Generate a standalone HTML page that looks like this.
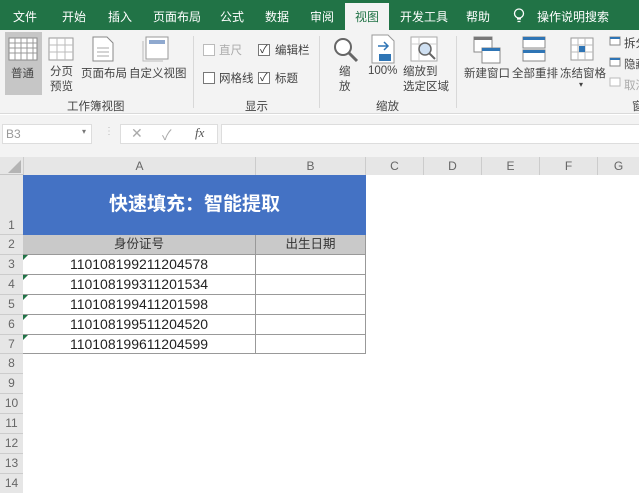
<!DOCTYPE html>
<html><head><meta charset="utf-8">
<style>
*{margin:0;padding:0;box-sizing:border-box}
body{width:639px;height:493px;overflow:hidden;background:#fff;font-family:"Liberation Sans","Noto Sans CJK SC",sans-serif;position:relative;font-size:12px;color:#333}
.abs{position:absolute}
.tabs{left:0;top:0;width:639px;height:30px;background:#217346}
.tab{position:absolute;top:8px;color:#fff;font-size:12px}
.ribbon{left:0;top:30px;width:639px;height:84px;background:#f3f3f3;border-bottom:1px solid #dadada}
.rl{position:absolute;font-size:11.5px;color:#444;white-space:nowrap}
.sep{position:absolute;top:36px;width:1px;height:72px;background:#d8d8d8}
.cb{position:absolute;width:12px;height:12px;border:1px solid #777;background:#fff}
.hdr{background:#e6e6e6;color:#666;font-size:12px;text-align:center;position:absolute}
.id{width:233px;border-right:1px solid #999;text-align:center;line-height:19px;font-size:14px;color:#222}
</style></head><body>
<div class="abs tabs">
<span class="tab" style="left:13px">文件</span>
<span class="tab" style="left:62px">开始</span>
<span class="tab" style="left:108px">插入</span>
<span class="tab" style="left:153px">页面布局</span>
<span class="tab" style="left:220px">公式</span>
<span class="tab" style="left:265px">数据</span>
<span class="tab" style="left:310px">审阅</span>
<div class="abs" style="left:345px;top:3px;width:44px;height:27px;background:#f3f3f3"></div>
<span class="tab" style="left:355px;color:#217346">视图</span>
<span class="tab" style="left:400px">开发工具</span>
<span class="tab" style="left:466px">帮助</span>
<svg class="abs" style="left:513px;top:8px" width="12" height="15"><circle cx="6" cy="5.5" r="4.5" fill="none" stroke="#fff" stroke-width="1.3"/><path d="M4 11h4M4.5 13.5h3" stroke="#fff" stroke-width="1.3"/></svg>
<span class="tab" style="left:537px">操作说明搜索</span>
</div>
<div class="abs ribbon"></div>
<div class="abs" style="left:5px;top:32px;width:37px;height:63px;background:#c6c6c6"></div>
<svg class="abs" style="left:8px;top:37px" width="30" height="24"><rect x="1" y="1" width="28" height="22" fill="#fff" stroke="#888"/><path d="M1 6h28M1 11h28M1 16h28M7 1v22M13 1v22M19 1v22M25 1v22" stroke="#999"/></svg>
<span class="rl" style="left:11px;top:65px">普通</span>
<svg class="abs" style="left:48px;top:37px" width="26" height="24"><rect x="1" y="1" width="24" height="22" fill="#fff" stroke="#999"/><path d="M1 8h24M1 15h24M9 1v22M17 1v22" stroke="#bbb"/></svg>
<span class="rl" style="left:50px;top:65px;line-height:15px">分页<br>预览</span>
<svg class="abs" style="left:92px;top:36px" width="22" height="26"><path d="M1 1h14l6 6v18H1z" fill="#fff" stroke="#888"/><path d="M5 12h12M5 16h12M5 20h12" stroke="#aaa"/></svg>
<span class="rl" style="left:81px;top:65px">页面布局</span>
<svg class="abs" style="left:142px;top:36px" width="28" height="26"><rect x="4" y="1" width="22" height="22" fill="#fff" stroke="#999"/><rect x="7" y="4" width="16" height="4" fill="#8fa9cf"/><path d="M1 5v20h20" fill="none" stroke="#bbb"/></svg>
<span class="rl" style="left:129px;top:65px">自定义视图</span>
<span class="rl" style="left:67px;top:98px">工作簿视图</span>
<div class="sep" style="left:193px"></div>
<div class="cb" style="left:203px;top:44px;border-color:#bbb"></div><span class="rl" style="left:219px;top:42px;color:#aaa">直尺</span>
<div class="cb" style="left:258px;top:44px"></div><span class="abs" style="left:260px;top:41px;font-size:11px">✓</span><span class="rl" style="left:275px;top:42px">编辑栏</span>
<div class="cb" style="left:203px;top:72px"></div><span class="rl" style="left:219px;top:70px">网格线</span>
<div class="cb" style="left:258px;top:72px"></div><span class="abs" style="left:260px;top:69px;font-size:11px">✓</span><span class="rl" style="left:275px;top:70px">标题</span>
<span class="rl" style="left:245px;top:98px">显示</span>
<div class="sep" style="left:319px"></div>
<svg class="abs" style="left:332px;top:36px" width="28" height="28"><circle cx="11" cy="11" r="8" fill="#fff" stroke="#666" stroke-width="2"/><path d="M17 17l8 8" stroke="#666" stroke-width="3"/></svg>
<span class="rl" style="left:339px;top:65px;line-height:15px">缩<br>放</span>
<svg class="abs" style="left:370px;top:34px" width="26" height="30"><path d="M2 1h16l6 6v22H2z" fill="#fff" stroke="#999"/><path d="M8 12h10M14 8l4 4-4 4" fill="none" stroke="#2f75b5" stroke-width="1.5"/><rect x="9" y="20" width="12" height="7" fill="#2f75b5"/></svg>
<span class="rl" style="left:368px;top:65px">100%</span>
<svg class="abs" style="left:410px;top:36px" width="30" height="28"><rect x="1" y="1" width="26" height="24" fill="#fff" stroke="#aaa"/><path d="M1 8h26M9 1v24" stroke="#ccc"/><circle cx="15" cy="13" r="6" fill="#cfe0f2" stroke="#666" stroke-width="1.5"/><path d="M19 17l6 6" stroke="#666" stroke-width="2"/></svg>
<span class="rl" style="left:403px;top:65px;line-height:15px">缩放到<br>选定区域</span>
<span class="rl" style="left:376px;top:98px">缩放</span>
<div class="sep" style="left:456px"></div>
<svg class="abs" style="left:473px;top:36px" width="28" height="28"><rect x="1" y="1" width="18" height="15" fill="#fff" stroke="#888"/><rect x="1" y="1" width="18" height="3" fill="#777"/><rect x="9" y="12" width="18" height="15" fill="#fff" stroke="#888"/><rect x="9" y="12" width="18" height="3" fill="#2f75b5"/></svg>
<span class="rl" style="left:464px;top:65px">新建窗口</span>
<svg class="abs" style="left:522px;top:36px" width="24" height="26"><rect x="1" y="1" width="22" height="11" fill="#fff" stroke="#888"/><rect x="1" y="1" width="22" height="3" fill="#2f75b5"/><rect x="1" y="14" width="22" height="11" fill="#fff" stroke="#888"/><rect x="1" y="14" width="22" height="3" fill="#2f75b5"/></svg>
<span class="rl" style="left:512px;top:65px">全部重排</span>
<svg class="abs" style="left:570px;top:37px" width="24" height="24"><rect x="1" y="1" width="22" height="22" fill="#fff" stroke="#999"/><path d="M1 8h22M1 15h22M8 1v22M15 1v22" stroke="#bbb"/><rect x="9" y="9" width="6" height="6" fill="#2f75b5"/></svg>
<span class="rl" style="left:560px;top:65px">冻结窗格</span>
<span class="rl" style="left:579px;top:80px;font-size:8px">▾</span>
<svg class="abs" style="left:609px;top:36px" width="12" height="60"><rect x="1" y="1" width="10" height="8" fill="#fff" stroke="#888"/><rect x="1" y="1" width="10" height="2" fill="#2f75b5"/><rect x="1" y="22" width="10" height="8" fill="#fff" stroke="#888"/><rect x="1" y="22" width="10" height="2" fill="#2f75b5"/><rect x="1" y="42" width="10" height="8" fill="#fff" stroke="#bbb"/></svg>
<span class="rl" style="left:624px;top:35px">拆分</span>
<span class="rl" style="left:624px;top:56px">隐藏</span>
<span class="rl" style="left:624px;top:77px;color:#aaa">取消</span>
<span class="rl" style="left:632px;top:98px">窗</span>
<div class="abs" style="left:0;top:115px;width:639px;height:42px;background:#f3f3f3"></div>
<div class="abs" style="left:2px;top:124px;width:90px;height:20px;background:#fff;border:1px solid #ddd"></div>
<span class="abs" style="left:6px;top:127px;color:#999;font-size:12px">B3</span>
<span class="abs" style="left:82px;top:127px;color:#777;font-size:8px">▾</span>
<span class="abs" style="left:104px;top:126px;color:#bbb;font-size:10px">⋮</span>
<div class="abs" style="left:120px;top:124px;width:98px;height:20px;background:#fff;border:1px solid #ddd"></div>
<span class="abs" style="left:131px;top:125px;color:#aaa;font-size:14px">✕</span>
<span class="abs" style="left:162px;top:125px;color:#aaa;font-size:14px">✓</span>
<span class="abs" style="left:195px;top:125px;color:#555;font-size:13px;font-style:italic;font-family:'Liberation Serif',serif">fx</span>
<div class="abs" style="left:221px;top:124px;width:418px;height:20px;background:#fff;border:1px solid #ddd;border-right:none"></div>
<div class="hdr" style="left:0;top:157px;width:639px;height:18px;border-bottom:1px solid #c6c6c6"></div>
<svg class="abs" style="left:6px;top:160px" width="16" height="14"><path d="M15 0v13H2z" fill="#b4b4b4"/></svg>
<div class="hdr" style="left:23px;top:157px;width:233px;height:18px;line-height:18px;border-left:1px solid #ccc;border-right:1px solid #ccc">A</div>
<div class="hdr" style="left:256px;top:157px;width:110px;height:18px;line-height:18px;border-right:1px solid #ccc">B</div>
<div class="hdr" style="left:366px;top:157px;width:58px;height:18px;line-height:18px;border-right:1px solid #ccc">C</div>
<div class="hdr" style="left:424px;top:157px;width:58px;height:18px;line-height:18px;border-right:1px solid #ccc">D</div>
<div class="hdr" style="left:482px;top:157px;width:58px;height:18px;line-height:18px;border-right:1px solid #ccc">E</div>
<div class="hdr" style="left:540px;top:157px;width:58px;height:18px;line-height:18px;border-right:1px solid #ccc">F</div>
<div class="hdr" style="left:598px;top:157px;width:41px;height:18px;line-height:18px">G</div>
<div class="hdr" style="left:0;top:175px;width:23px;height:318px;border-right:1px solid #c6c6c6"></div>
<div class="hdr" style="left:0;top:175px;width:23px;height:60px;border-bottom:1px solid #ccc;line-height:100px">1</div>
<div class="hdr" style="left:0;top:235px;width:23px;height:20px;line-height:19px;border-bottom:1px solid #ccc">2</div>
<div class="hdr" style="left:0;top:255px;width:23px;height:20px;line-height:19px;border-bottom:1px solid #ccc">3</div>
<div class="hdr" style="left:0;top:275px;width:23px;height:20px;line-height:19px;border-bottom:1px solid #ccc">4</div>
<div class="hdr" style="left:0;top:295px;width:23px;height:20px;line-height:19px;border-bottom:1px solid #ccc">5</div>
<div class="hdr" style="left:0;top:315px;width:23px;height:20px;line-height:19px;border-bottom:1px solid #ccc">6</div>
<div class="hdr" style="left:0;top:335px;width:23px;height:19px;line-height:18px;border-bottom:1px solid #ccc">7</div>
<div class="hdr" style="left:0;top:354px;width:23px;height:20px;line-height:19px;border-bottom:1px solid #ccc">8</div>
<div class="hdr" style="left:0;top:374px;width:23px;height:20px;line-height:19px;border-bottom:1px solid #ccc">9</div>
<div class="hdr" style="left:0;top:394px;width:23px;height:20px;line-height:19px;border-bottom:1px solid #ccc">10</div>
<div class="hdr" style="left:0;top:414px;width:23px;height:20px;line-height:19px;border-bottom:1px solid #ccc">11</div>
<div class="hdr" style="left:0;top:434px;width:23px;height:20px;line-height:19px;border-bottom:1px solid #ccc">12</div>
<div class="hdr" style="left:0;top:454px;width:23px;height:20px;line-height:19px;border-bottom:1px solid #ccc">13</div>
<div class="hdr" style="left:0;top:474px;width:23px;height:19px;line-height:19px">14</div>
<div class="abs" style="left:23px;top:175px;width:343px;height:60px;background:#4472c4;color:#fff;font-weight:bold;font-size:19px;text-align:center;line-height:60px">快速填充：智能提取</div>
<div class="abs" style="left:23px;top:235px;width:233px;height:20px;background:#c9c9c9;border-right:1px solid #999;border-bottom:1px solid #999;text-align:center;line-height:19px;font-size:12.5px">身份证号</div>
<div class="abs" style="left:256px;top:235px;width:110px;height:20px;background:#c9c9c9;border-right:1px solid #999;border-bottom:1px solid #999;text-align:center;line-height:19px;font-size:12.5px">出生日期</div>
<div class="abs" style="left:23px;top:255px;width:343px;height:99px">
<div style="height:20px;border-bottom:1px solid #999;display:flex"><div class="id">110108199211204578</div></div>
<div style="height:20px;border-bottom:1px solid #999;display:flex"><div class="id">110108199311201534</div></div>
<div style="height:20px;border-bottom:1px solid #999;display:flex"><div class="id">110108199411201598</div></div>
<div style="height:20px;border-bottom:1px solid #999;display:flex"><div class="id">110108199511204520</div></div>
<div style="height:19px;border-bottom:1px solid #999;display:flex"><div class="id" style="line-height:18px">110108199611204599</div></div>
<div class="abs" style="left:342px;top:0;width:1px;height:99px;background:#999"></div>
</div>
<svg class="abs" style="left:23px;top:255px" width="6" height="90"><path d="M0 0h5L0 5zM0 20h5L0 25zM0 40h5L0 45zM0 60h5L0 65zM0 80h5L0 85z" fill="#217346"/></svg>
</body></html>
